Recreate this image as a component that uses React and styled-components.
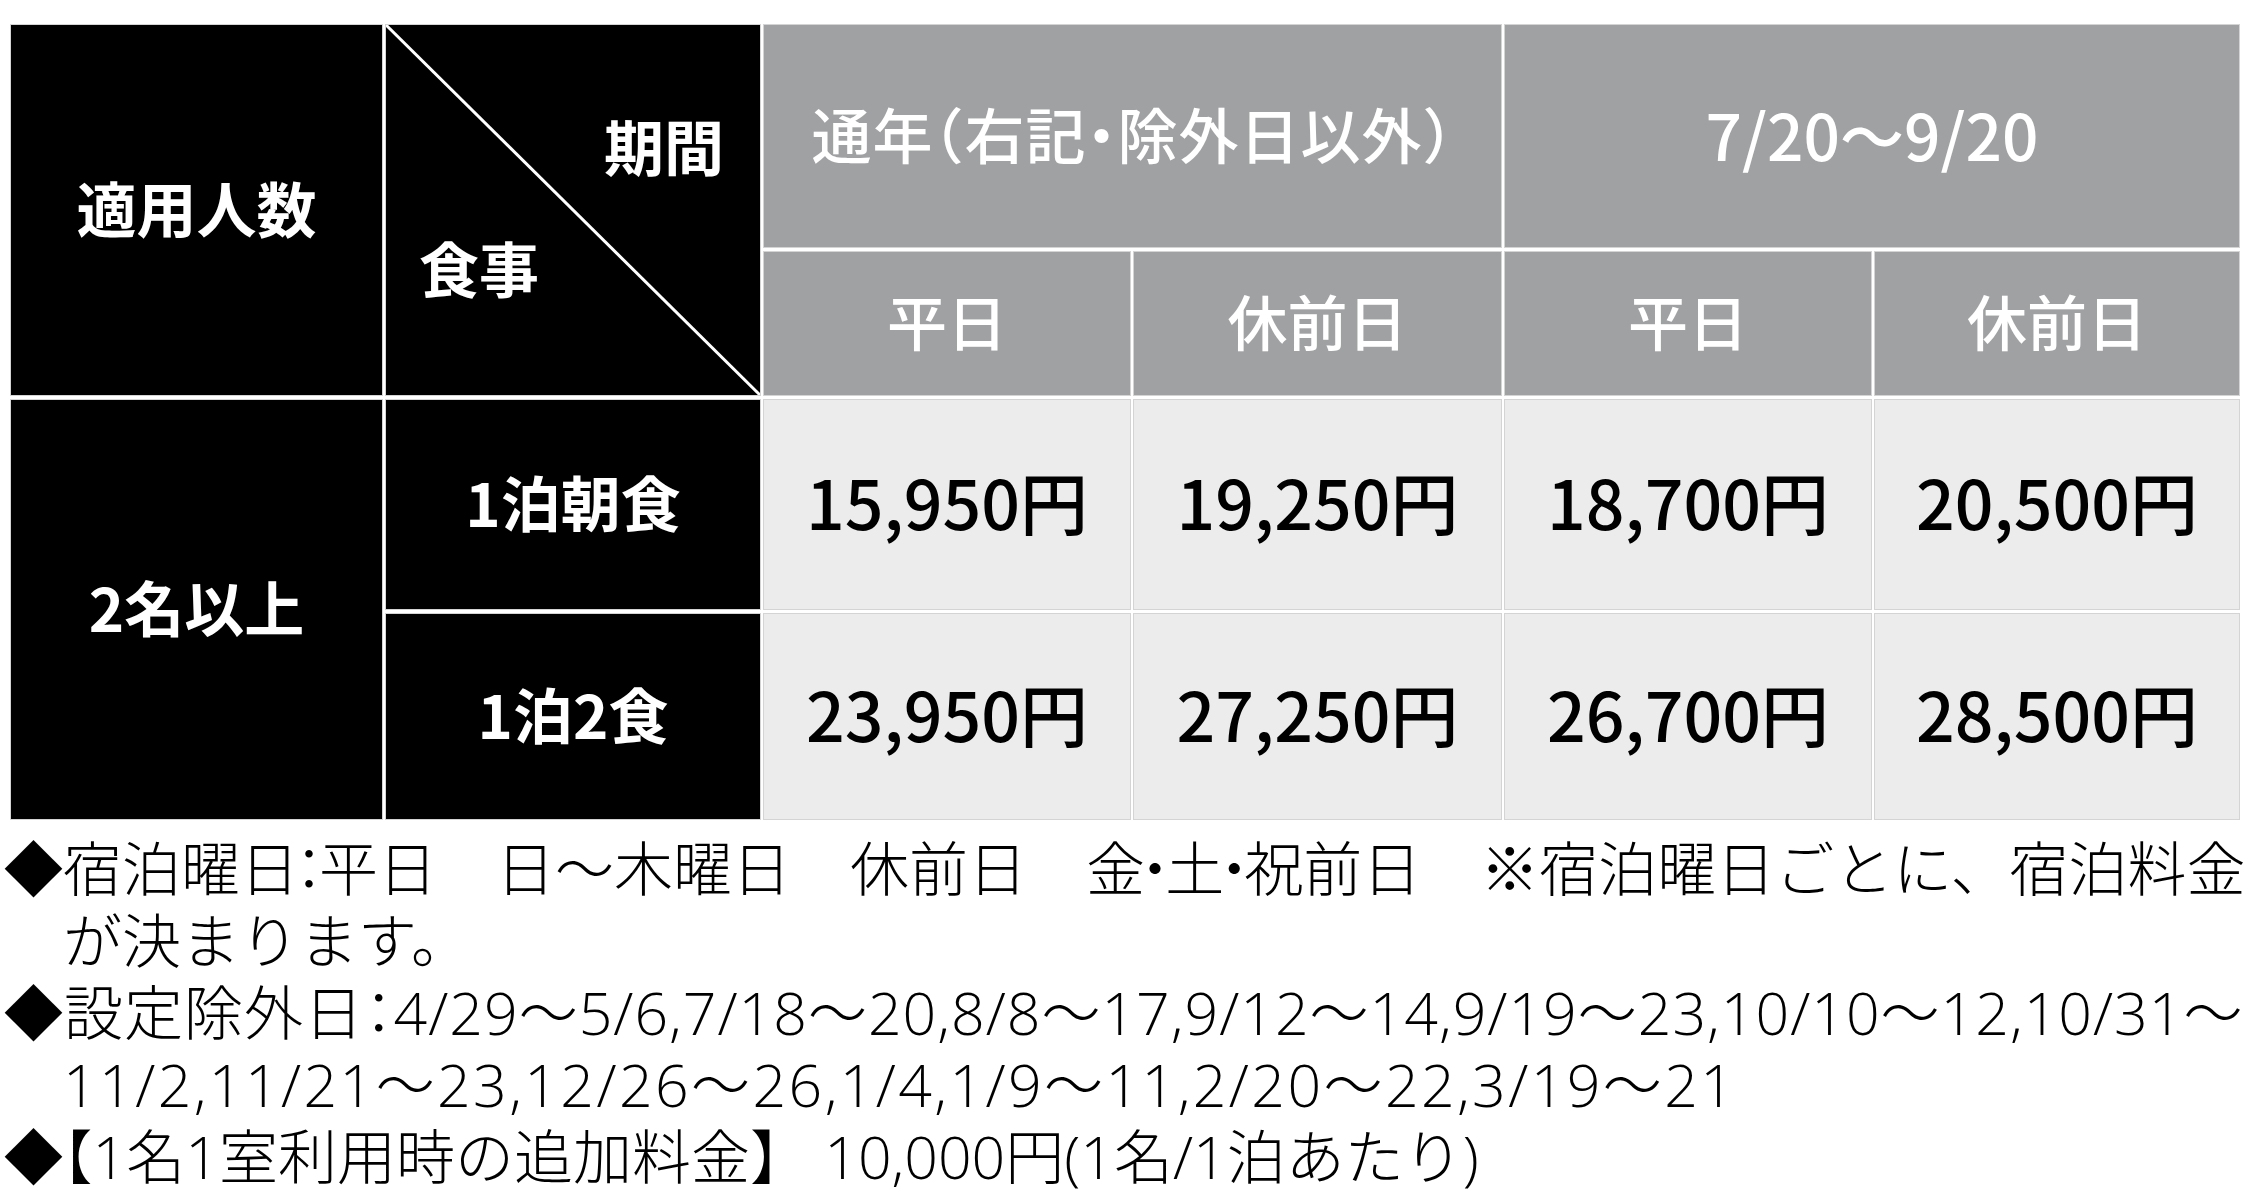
import React from "react";
import styled, { createGlobalStyle } from "styled-components";

const Global = createGlobalStyle`
  html, body { margin: 0; padding: 0; background: #ffffff; }
  body { font-family: "Noto Sans CJK JP", "Noto Sans", sans-serif; }
`;

const Page = styled.div`
  width: 2250px;
  padding: 25px 11px 0 11px;
  box-sizing: border-box;
`;

const Table = styled.div`
  display: grid;
  grid-template-columns: 371px 374px 366px 367px 366px 364px;
  grid-template-rows: 222px 143px 209px 205px;
  column-gap: 4px;
  row-gap: 5px;
  background: #ffffff;
`;

const Cell = styled.div`
  position: relative;
  display: flex;
  align-items: center;
  justify-content: center;
  box-sizing: border-box;
  padding-bottom: 7px;
  grid-column: ${(p) => p.$col || "auto"};
  grid-row: ${(p) => p.$row || "auto"};
  background: ${(p) =>
    p.$tone === "dark" ? "#000000" : p.$tone === "gray" ? "#a0a1a3" : "#ececec"};
  color: ${(p) => (p.$tone === "light" ? "#000000" : "#ffffff")};
  font-size: ${(p) => p.$size || 60}px;
  font-weight: ${(p) => (p.$tone === "dark" ? 700 : 500)};
  font-feature-settings: "halt";
  letter-spacing: ${(p) => p.$ls || 0}px;
  line-height: 1;
  white-space: nowrap;
  box-shadow: 0 0 0 1px #d4d4d4;
`;

const DiagonalCell = styled(Cell)`
  flex-direction: column;
  align-items: stretch;
  justify-content: center;
  gap: 62px;
  padding: 0 36px 9px 33px;
`;

const DiagLine = styled.svg`
  position: absolute;
  inset: 0;
  width: 100%;
  height: 100%;
  pointer-events: none;
`;

const CornerLabel = styled.span`
  position: relative;
  align-self: ${(p) => (p.$end ? "flex-end" : "flex-start")};
`;

const Notes = styled.div`
  padding: 13px 0 0 0;
  margin-left: -7px;
  font-family: "Open Sans", "Noto Sans CJK JP Light", "Noto Sans CJK JP DemiLight", "Noto Sans CJK JP", sans-serif;
  font-size: 59px;
  line-height: 72px;
  font-weight: 300;
  color: #000000;
`;

const Note = styled.div`
  padding-left: 1em;
  text-indent: -1em;
  white-space: nowrap;
`;

const Line = styled.span`
  letter-spacing: ${(p) => p.$ls || 0}px;
`;

const Mark = styled.span`
  display: inline-flex;
  justify-content: center;
  width: ${(p) => p.$w || 0.34}em;
  text-indent: 0;
  letter-spacing: 0;
`;

const HalfBracket = styled.span`
  font-feature-settings: "halt";
`;

const prices = [
  ["1泊朝食", ["15,950円", "19,250円", "18,700円", "20,500円"]],
  ["1泊2食", ["23,950円", "27,250円", "26,700円", "28,500円"]],
];

export default function App() {
  return (
    <>
      <Global />
      <Page>
        <Table>
          <Cell $tone="dark" $col="1" $row="1 / span 2">適用人数</Cell>
          <DiagonalCell $tone="dark" $col="2" $row="1 / span 2">
            <DiagLine viewBox="0 0 100 100" preserveAspectRatio="none">
              <line x1="0" y1="0" x2="100" y2="100" stroke="#ffffff" strokeWidth="3" vectorEffect="non-scaling-stroke" />
            </DiagLine>
            <CornerLabel $end>期間</CornerLabel>
            <CornerLabel>食事</CornerLabel>
          </DiagonalCell>
          <Cell $tone="gray" $col="3 / span 2" $row="1" $ls={1}>通年（右記・除外日以外）</Cell>
          <Cell $tone="gray" $col="5 / span 2" $row="1" $size={64}>7/20～9/20</Cell>
          <Cell $tone="gray" $col="3" $row="2">平日</Cell>
          <Cell $tone="gray" $col="4" $row="2">休前日</Cell>
          <Cell $tone="gray" $col="5" $row="2">平日</Cell>
          <Cell $tone="gray" $col="6" $row="2">休前日</Cell>
          <Cell $tone="dark" $col="1" $row="3 / span 2">2名以上</Cell>
          {prices.map(([label, vals], i) => (
            <React.Fragment key={label}>
              <Cell $tone="dark" $col="2" $row={String(3 + i)}>{label}</Cell>
              {vals.map((v, j) => (
                <Cell key={j} $tone="light" $col={String(3 + j)} $row={String(3 + i)} $size={68}>
                  {v}
                </Cell>
              ))}
            </React.Fragment>
          ))}
        </Table>
        <Notes>
          <Note>
            ◆宿泊曜日<Mark>：</Mark>平日　日～木曜日　休前日　金<Mark>・</Mark>土<Mark>・</Mark>祝前日　※宿泊曜日ごとに、宿泊料金
            <br />
            が決まります。
          </Note>
          <Note>
            <Line $ls={1}>
              ◆設定除外日<Mark $w={0.5}>：</Mark>4/29～5/6,7/18～20,8/8～17,9/12～14,9/19～23,10/10～12,10/31～
            </Line>
            <br />
            <Line $ls={2.4}>11/2,11/21～23,12/26～26,1/4,1/9～11,2/20～22,3/19～21</Line>
          </Note>
          <Note>
            ◆<HalfBracket>【</HalfBracket>1名1室利用時の追加料金】 10,000円(1名/1泊あたり)
          </Note>
        </Notes>
      </Page>
    </>
  );
}
